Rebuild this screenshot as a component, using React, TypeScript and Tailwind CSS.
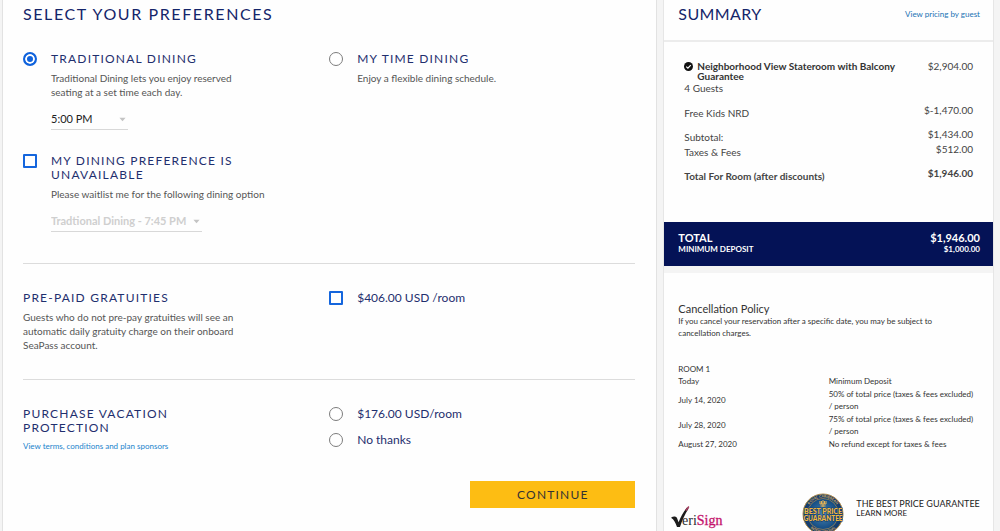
import { useState } from "react";
import type { ReactNode } from "react";

const radio =
  "appearance-none shrink-0 w-[14px] h-[14px] rounded-full border border-[#7c7c7c] bg-white checked:border-2 checked:border-[#0f62dc] checked:bg-[#0f62dc] checked:shadow-[inset_0_0_0_2px_white] cursor-pointer";
const checkbox =
  "appearance-none shrink-0 w-[14px] h-[14px] rounded-[1px] border-2 border-[#1566dd] bg-white checked:bg-[#1566dd] cursor-pointer";
const title = "text-[12px] leading-[14px] tracking-widest uppercase text-[#1f2f6e]";
const note = "mt-[5px] text-[10px] leading-[14px] text-[#555]";

const schedule = [
  { date: "Today", charge: "Minimum Deposit" },
  { date: "July 14, 2020", charge: "50% of total price (taxes & fees excluded) / person" },
  { date: "July 28, 2020", charge: "75% of total price (taxes & fees excluded) / person" },
  { date: "August 27, 2020", charge: "No refund except for taxes & fees" },
];

function Caret({ className }: { className: string }) {
  return (
    <svg viewBox="0 0 8 5" className={`pointer-events-none absolute top-[8px] w-[7px] h-[5px] ${className}`}>
      <path d="M0.5 0.5h7L4 4.5z" fill="currentColor" />
    </svg>
  );
}

function PriceRow({ label, amount, className = "" }: { label: ReactNode; amount: string; className?: string }) {
  return (
    <div className={`flex justify-between text-[10px] leading-[12px] ${className}`}>
      <dt className="pt-[3px]">{label}</dt>
      <dd>{amount}</dd>
    </div>
  );
}

function VeriSign() {
  return (
    <svg viewBox="0 0 58 28" className="w-[58px] h-[28px]" role="img" aria-label="VeriSign">
      <path d="M0 12.800c2.200-1.800 5-1.800 6 .2l1.600 4.200C9.600 12 12.500 6.500 16 2.500l1.600 1C13.800 9.500 10.800 16 9 22H6C4.500 18 3 14.500 0 12.800z" fill="#1c1c1c" />
      <path d="M14 5l3.400-4 1 1-2.600 4z" fill="#a23a5c" />
      <text x="11" y="20" fontFamily="Liberation Serif, serif" fontSize="14" fill="#2b2b2b">
        eri<tspan fill="#c4126b" stroke="#c4126b" strokeWidth=".3">Sign</tspan>
      </text>
    </svg>
  );
}

function PriceBadge() {
  return (
    <svg viewBox="0 0 42 42" className="w-[42px] h-[42px] shrink-0" role="img" aria-label="Best Price Guarantee">
      <defs>
        <radialGradient id="badge">
          <stop offset="0" stopColor="#4a83ad" />
          <stop offset="1" stopColor="#124a82" />
        </radialGradient>
        <path id="top-arc" d="M4.500 21a16.500 16.500 0 0 1 33 0" />
        <path id="bottom-arc" d="M2 21a19 19 0 0 0 38 0" />
      </defs>
      <circle cx="21" cy="21" r="20" fill="#153f70" stroke="#b08a4a" strokeWidth="1" />
      <circle cx="21" cy="21" r="15.500" fill="url(#badge)" stroke="#c79a4b" strokeWidth=".6" />
      <g fontFamily="Lato, sans-serif" fontWeight="700" fill="#d9ad5e" textAnchor="middle">
        <text fontSize="3.500">
          <textPath href="#top-arc" startOffset="50%">ROYAL CARIBBEAN</textPath>
        </text>
        <text fontSize="3.500">
          <textPath href="#bottom-arc" startOffset="50%">INTERNATIONAL</textPath>
        </text>
      </g>
      <path d="M18 8v3h6V8M21 7v7M18.500 13h5M19.500 8v3M22.500 8v3" fill="none" stroke="#e8b455" strokeWidth="1" />
      <g fontFamily="Lato, sans-serif" fontWeight="900" fill="#f3b83f" stroke="#153f70" strokeWidth="1" paintOrder="stroke" textAnchor="middle">
        <text x="21" y="21" fontSize="7">BEST PRICE</text>
        <text x="21" y="28" fontSize="6.500">GUARANTEE</text>
      </g>
    </svg>
  );
}

export default function App() {
  const [dining, setDining] = useState("traditional");
  const [protection, setProtection] = useState("");

  return (
    <div className="flex min-h-screen gap-[6px] bg-[#f4f4f4] pl-[2px] pr-[6px] font-[Lato,sans-serif]">
      <main className="flex-1 border-x border-[#e2e2e2] bg-[#fefefe] pl-5 pr-[21px] pb-5">
        <h1 className="pt-1 text-[16px] leading-5 tracking-widest uppercase text-[#14256a]">Select your preferences</h1>

        <section className="grid grid-cols-2 items-start border-b border-[#dcdcdc] pt-7 pb-[31px]">
          <div>
            <div className="flex gap-[14px]">
              <input id="traditional" type="radio" name="dining" className={radio} checked={dining === "traditional"} onChange={() => setDining("traditional")} />
              <div>
                <label htmlFor="traditional" className={`block ${title}`}>Traditional Dining</label>
                <p className={`${note} max-w-[190px]`}>Traditional Dining lets you enjoy reserved seating at a set time each day.</p>
                <div className="relative mt-[10px] w-[77px] text-[#c4c4c4]">
                  <select aria-label="Dining time" className="block w-full h-[21px] appearance-none border-b border-[#d8d8d8] bg-transparent text-[11px] text-[#222]">
                    <option>5:00 PM</option>
                  </select>
                  <Caret className="right-[2px]" />
                </div>
              </div>
            </div>
            <div className="mt-6 flex gap-[14px]">
              <input id="waitlist" type="checkbox" className={checkbox} />
              <div>
                <label htmlFor="waitlist" className={`block max-w-[200px] ${title}`}>My dining preference is unavailable</label>
                <p className={note}>Please waitlist me for the following dining option</p>
                <div className="relative mt-[10px] w-[151px] text-[#c4c4c4]">
                  <select disabled aria-label="Waitlist dining option" className="block w-full h-[21px] appearance-none border-b border-[#d8d8d8] bg-transparent text-[11px] font-bold text-[#cfcfcf] opacity-100">
                    <option>Tradtional Dining - 7:45 PM</option>
                  </select>
                  <Caret className="right-[2px]" />
                </div>
              </div>
            </div>
          </div>
          <div className="flex gap-[14px]">
            <input id="mytime" type="radio" name="dining" className={radio} checked={dining === "mytime"} onChange={() => setDining("mytime")} />
            <div>
              <label htmlFor="mytime" className={`block ${title}`}>My Time Dining</label>
              <p className={note}>Enjoy a flexible dining schedule.</p>
            </div>
          </div>
        </section>

        <section className="grid grid-cols-2 items-start border-b border-[#dcdcdc] pt-[27px] pb-[27px]">
          <div>
            <h2 className={title}>Pre-paid Gratuities</h2>
            <p className={`${note} max-w-[220px]`}>
              Guests who do not pre-pay gratuities will see an automatic daily gratuity charge on their onboard SeaPass account.
            </p>
          </div>
          <label className="flex gap-[14px] text-[12px] leading-[14px] text-[#1f2f6e]">
            <input type="checkbox" className={checkbox} />
            $406.00 USD /room
          </label>
        </section>

        <section className="grid grid-cols-2 items-start pt-[27px]">
          <div>
            <h2 className={`max-w-[200px] ${title}`}>Purchase Vacation Protection</h2>
            <a href="#terms" className="mt-1 block text-[8px] leading-[14px] text-[#1b84cc]">View terms, conditions and plan sponsors</a>
          </div>
          <div className="flex flex-col gap-3 text-[12px] leading-[14px] text-[#1f2f6e]">
            <label className="flex gap-[14px]">
              <input type="radio" name="protection" className={radio} checked={protection === "yes"} onChange={() => setProtection("yes")} />
              $176.00 USD/room
            </label>
            <label className="flex gap-[14px]">
              <input type="radio" name="protection" className={radio} checked={protection === "no"} onChange={() => setProtection("no")} />
              No thanks
            </label>
          </div>
        </section>

        <div className="flex justify-end pt-7">
          <button className="h-[27px] w-[165px] bg-[#fdbd13] text-[12px] tracking-widest text-[#333] uppercase cursor-pointer">Continue</button>
        </div>
      </main>

      <aside className="w-1/3 border-x border-[#e6e6e6] bg-[#fefefe] text-[#444]">
        <header className="flex items-center justify-between border-b-2 border-[#ececec] pl-[14px] pr-[13px] pt-1 pb-4">
          <h2 className="text-[16px] leading-5 tracking-wide uppercase text-[#14256a]">Summary</h2>
          <a href="#pricing" className="text-[8px] text-[#2173b4]">View pricing by guest</a>
        </header>

        <dl className="px-5 pt-[17px] pb-10">
          <div className="flex justify-between text-[10px]">
            <dt className="flex gap-1 pt-[2px] font-bold leading-[10px] text-[#333]">
              <svg viewBox="0 0 10 10" className="mt-px h-[9px] w-[9px] shrink-0">
                <circle cx="5" cy="5" r="5" fill="#111" />
                <path d="M2.500 5.200l1.800 1.700 3.200-3.500" fill="none" stroke="#fff" strokeWidth="1.300" />
              </svg>
              <span className="max-w-[210px]">Neighborhood View Stateroom with Balcony Guarantee</span>
            </dt>
            <dd className="leading-[14px]">$2,904.00</dd>
          </div>
          <dd className="text-[10px] leading-[14px]">4 Guests</dd>
          <PriceRow label="Free Kids NRD" amount="$-1,470.00" className="mt-[9px]" />
          <PriceRow label="Subtotal:" amount="$1,434.00" className="mt-[9px]" />
          <PriceRow label="Taxes & Fees" amount="$512.00" />
          <PriceRow label="Total For Room (after discounts)" amount="$1,946.00" className="mt-[9px] font-bold" />
        </dl>

        <dl className="bg-[#041256] pl-[14px] pr-[13px] pt-[10px] pb-3 font-bold text-white">
          <div className="flex justify-between text-[11px] leading-[12px]">
            <dt>TOTAL</dt>
            <dd>$1,946.00</dd>
          </div>
          <div className="flex justify-between text-[8px] leading-[10px]">
            <dt>MINIMUM DEPOSIT</dt>
            <dd>$1,000.00</dd>
          </div>
        </dl>
        <div className="h-[7px] bg-[#f4f4f4]" />

        <section className="px-[14px] pt-[30px] text-[8px] leading-[12px] text-[#333]">
          <h3 className="text-[11px] leading-[12px]">Cancellation Policy</h3>
          <p className="max-w-[270px]">If you cancel your reservation after a specific date, you may be subject to cancellation charges.</p>
          <table className="mt-6 w-full">
            <caption className="text-left">ROOM 1</caption>
            <tbody>
              {schedule.map((row) => (
                <tr key={row.date}>
                  <td className="w-1/2 pb-px">{row.date}</td>
                  <td className="pr-1 pb-px">{row.charge}</td>
                </tr>
              ))}
            </tbody>
          </table>
        </section>

        <footer className="flex items-start pl-[7px] pt-[42px] text-[#222]">
          <div className="w-[131px] shrink-0 pt-3"><VeriSign /></div>
          <PriceBadge />
          <div className="pl-3 pt-[6px] whitespace-nowrap">
            <p className="text-[9px] leading-[10px]">THE BEST PRICE GUARANTEE</p>
            <a href="#guarantee" className="block text-[8px] leading-[9px]">LEARN MORE</a>
          </div>
        </footer>
      </aside>
    </div>
  );
}
